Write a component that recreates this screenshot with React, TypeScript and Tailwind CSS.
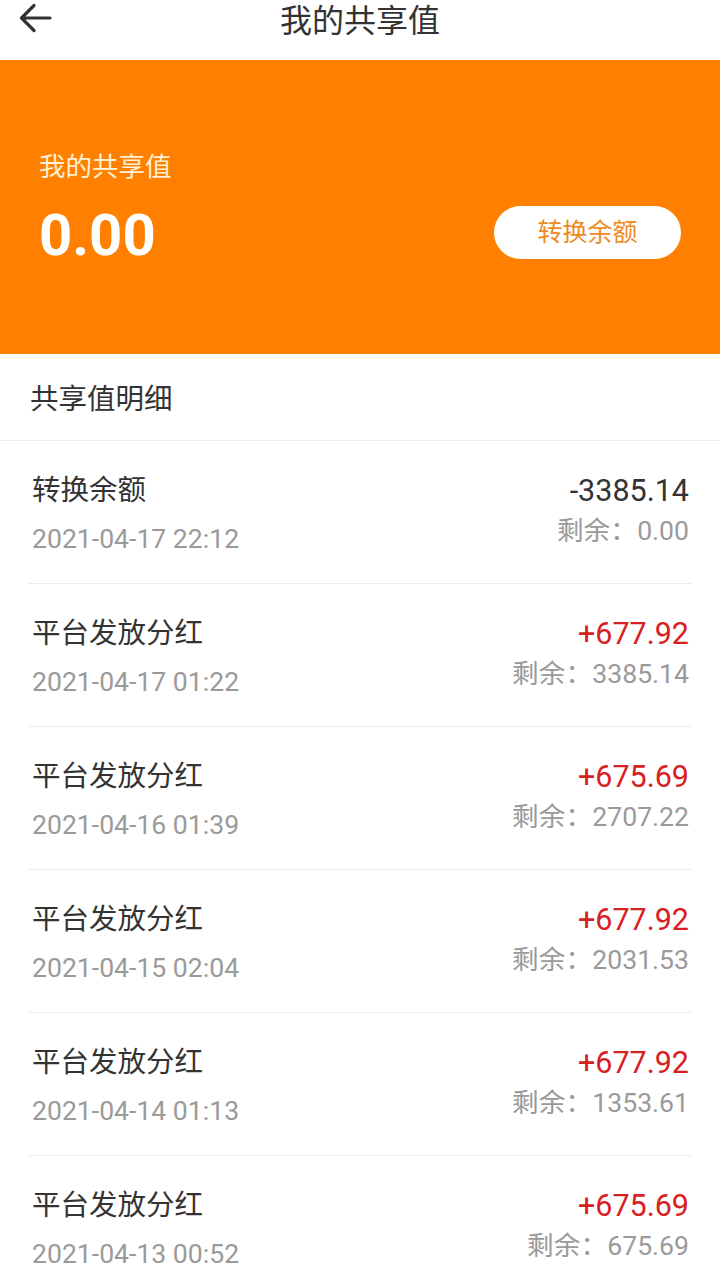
const FONT = { fontFamily: "Roboto, 'Noto Sans CJK SC', sans-serif" };

type Record = {
  title: string;
  time: string;
  amount: string;
  left: string;
};

const records: Record[] = [
  { title: "转换余额", time: "2021-04-17 22:12", amount: "-3385.14", left: "0.00" },
  { title: "平台发放分红", time: "2021-04-17 01:22", amount: "+677.92", left: "3385.14" },
  { title: "平台发放分红", time: "2021-04-16 01:39", amount: "+675.69", left: "2707.22" },
  { title: "平台发放分红", time: "2021-04-15 02:04", amount: "+677.92", left: "2031.53" },
  { title: "平台发放分红", time: "2021-04-14 01:13", amount: "+677.92", left: "1353.61" },
  { title: "平台发放分红", time: "2021-04-13 00:52", amount: "+675.69", left: "675.69" },
];

function BackArrow() {
  return (
    <svg width="34" height="32" viewBox="0 0 34 32" fill="none">
      <path
        d="M32 16H4M16 3.5L3.5 16L16 28.5"
        stroke="#333"
        strokeWidth="3.2"
        strokeLinecap="round"
        strokeLinejoin="round"
      />
    </svg>
  );
}

function RecordRow({ r }: { r: Record }) {
  const plus = r.amount.startsWith("+");
  return (
    <div className="mx-[28px] h-[143px] border-b border-[#ececec] flex justify-between pl-[4px] pr-[3px]">
      <div className="pt-[30px]">
        <div className="text-[28.5px] leading-[40px] text-[#333]">{r.title}</div>
        <div className="mt-[8px] text-[26.6px] leading-[40px] text-[#9a9a9a]">{r.time}</div>
      </div>
      <div className="pt-[30px] text-right">
        <div className={`text-[30.5px] leading-[40px] ${plus ? "text-[#d8201f]" : "text-[#333]"}`}>
          {r.amount}
        </div>
        <div className="text-[26.6px] leading-[40px] text-[#9a9a9a]">
          剩余<span className="inline-block w-[27px] text-center">：</span>
          {r.left}
        </div>
      </div>
    </div>
  );
}

export default function App() {
  return (
    <div className="w-[720px] min-h-[1287px] bg-white overflow-hidden" style={FONT}>
      <div className="relative h-[60px] bg-white">
        <div className="absolute left-[18px] top-[2px]">
          <BackArrow />
        </div>
        <div className="text-center text-[32px] leading-[42px] text-[#333]">我的共享值</div>
      </div>

      <div className="h-[294px] bg-[#ff8000] px-[39px] pt-[90px]">
        <div className="text-[26.5px] leading-[34px] text-[#fff0d4]">我的共享值</div>
        <div className="mt-[21px] flex items-center justify-between">
          <div className="text-[58px] leading-[60px] font-bold text-white">0.00</div>
          <button className="w-[187px] h-[53px] -mt-[5px] rounded-full bg-white text-[25px] text-[#ee8a22]">
            转换余额
          </button>
        </div>
      </div>

      <div className="h-[87px] border-b border-[#ececec] pl-[30px] pt-[26px]">
        <div className="text-[28.5px] leading-[40px] text-[#333]">共享值明细</div>
      </div>

      {records.map((r, i) => (
        <RecordRow key={i} r={r} />
      ))}
    </div>
  );
}
